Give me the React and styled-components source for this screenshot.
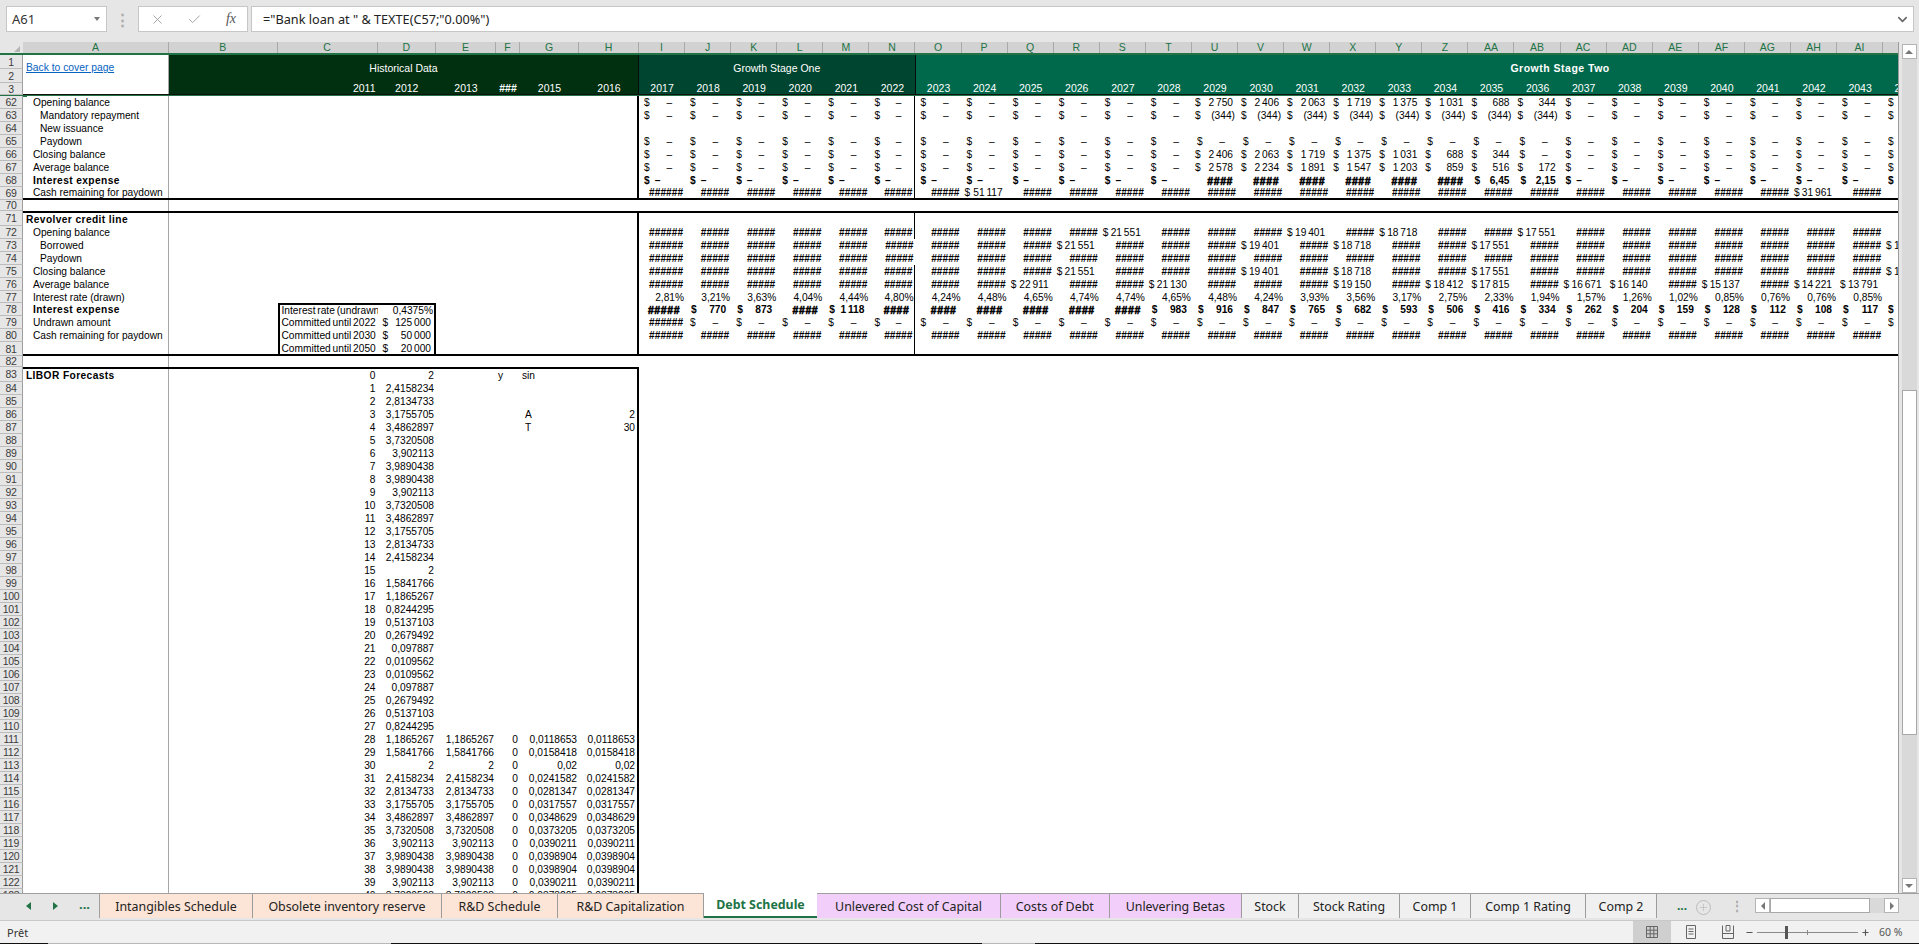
import React from 'react';
import styled, { createGlobalStyle } from 'styled-components';
import { X, Check, Plus, Minus, ChevronDown } from 'lucide-react';

const GRID = '146px 108.5px 100px 58.5px 60px 24px 59px 60px repeat(28, 46.08px)';
const GREEN = '#217346';

const Global = createGlobalStyle`
  html, body { margin: 0; padding: 0; background: #e6e6e6; overflow: hidden; }
  * { box-sizing: border-box; }
`;

const Page = styled.div`
  width: 1919px;
  height: 944px;
  display: flex;
  flex-direction: column;
  overflow: hidden;
  font-family: "Liberation Sans", Arial, sans-serif;
  color: #000;
`;

/* formula bar */
const FormulaBar = styled.div`
  height: 42px;
  flex: none;
  display: flex;
  align-items: flex-start;
  padding: 6px 5px 0 6px;
  font-family: "Noto Sans", sans-serif;
  font-size: 13px;
  color: #333;
`;
const NameBox = styled.div`
  width: 101px;
  height: 26px;
  background: #fff;
  border: 1px solid #c6c6c6;
  display: flex;
  align-items: center;
  justify-content: space-between;
  padding: 0 6px 0 5px;
`;
const Caret = styled.span`
  width: 0;
  height: 0;
  border-left: 3.5px solid transparent;
  border-right: 3.5px solid transparent;
  border-top: 4px solid #777;
`;
const Grip = styled.div`
  width: 31px;
  height: 26px;
  display: flex;
  align-items: center;
  justify-content: center;
  color: #a8a8a8;
  font-size: 15px;
  font-weight: 700;
`;
const FxGroup = styled.div`
  width: 110px;
  height: 26px;
  background: #fff;
  border: 1px solid #c6c6c6;
  display: grid;
  grid-template-columns: 36px 38px 36px;
  align-items: center;
  justify-items: center;
  color: #a0a0a0;
`;
const FxLabel = styled.span`
  font-family: "Liberation Serif", serif;
  font-style: italic;
  font-size: 14px;
  color: #555;
`;
const FormulaInput = styled.div`
  margin-left: 3px;
  flex: 1;
  height: 26px;
  background: #fff;
  border: 1px solid #c6c6c6;
  display: flex;
  align-items: center;
  justify-content: space-between;
  padding: 0 3px 0 11px;
  font-size: 12.7px;
  color: #222;
  svg { color: #666; }
`;

/* sheet */
const SheetArea = styled.div`
  height: 851px;
  flex: none;
  display: flex;
`;
const Sheet = styled.div`
  width: 1899px;
  flex: none;
  overflow: hidden;
  background: #fff;
  border-right: 1px solid #9c9c9c;
  display: flex;
  flex-direction: column;
`;
const ColumnHeader = styled.div`
  flex: none;
  height: 13px;
  display: flex;
  background: #d2d2d2;
  border-bottom: 2px solid ${GREEN};
`;
const Corner = styled.div`
  width: 23px;
  flex: none;
  background: #e6e6e6;
  display: flex;
  justify-content: flex-end;
  align-items: flex-end;
  padding: 0 3px 1px 0;
`;
const CornerMark = styled.span`
  width: 0;
  height: 0;
  border-left: 6px solid transparent;
  border-bottom: 6px solid #b4b4b4;
`;
const ColumnLetters = styled.div`
  display: grid;
  grid-template-columns: ${GRID};
`;
const ColumnLetter = styled.div`
  font-size: 10.5px;
  line-height: 11px;
  text-align: center;
  color: ${GREEN};
  border-right: 1px solid #a9a9a9;
`;

const TopBlock = styled.div`
  flex: none;
  height: 40px;
  display: flex;
  border-bottom: 1px solid #111;
`;
const TopNumbers = styled.div`
  width: 23px;
  flex: none;
  display: grid;
  grid-template-rows: 14px 14px 12px;
`;
const LinkCell = styled.div`
  width: 146px;
  flex: none;
  padding: 2px 0 0 3px;
  border-right: 1px solid #a6a6a6;
`;
const CoverLink = styled.a`
  color: #0563c1;
  font-size: 10.3px;
  text-decoration: underline;
`;
const Band = styled.div`
  flex: none;
  width: ${(p) => p.$w}px;
  background: ${(p) => p.$bg};
  color: #fff;
  display: flex;
  flex-direction: column;
  border-right: 1px solid #0a0a0a;
  font-size: 10.5px;
`;
const BandTitle = styled.div`
  flex: 1;
  display: flex;
  align-items: center;
  justify-content: center;
  font-weight: ${(p) => (p.$bold ? 700 : 400)};
  letter-spacing: ${(p) => (p.$bold ? '0.5px' : '0')};
  padding-bottom: 1px;
`;
const Years = styled.div`
  height: 12px;
  display: grid;
  grid-template-columns: ${(p) => p.$cols};
  line-height: 12px;
`;
const Year = styled.span`
  text-align: ${(p) => p.$align || 'center'};
  padding-right: ${(p) => (p.$align ? '2px' : '0')};
  font-weight: ${(p) => (p.$bold ? 700 : 400)};
`;
const FreezeLine = styled.div`
  flex: none;
  height: 1px;
  background: ${GREEN};
  position: relative;
`;
const ActiveCellMark = styled.span`
  position: absolute;
  left: 23px;
  top: 0;
  width: 4px;
  height: 2px;
  background: ${GREEN};
`;

const Line = styled.div`
  flex: none;
  height: ${(p) => p.$h}px;
  display: flex;
`;
const RowNo = styled.div`
  width: 23px;
  flex: none;
  background: #e6e6e6;
  border-right: 1px solid #9e9e9e;
  border-bottom: 1px solid #bcbcbc;
  color: #3c3c3c;
  font-size: 10.5px;
  letter-spacing: -0.3px;
  display: flex;
  align-items: center;
  justify-content: center;
`;
const Cells = styled.div`
  flex: none;
  width: ${(p) => (p.$short ? '616px' : 'auto')};
  display: grid;
  grid-template-columns: ${(p) => (p.$short ? '146px 108.5px 100px 58.5px 60px 24px 59px 60px' : GRID)};
  grid-auto-rows: 1fr;
  border-top: ${(p) => (p.$top ? '2px solid #000' : '0')};
  border-bottom: ${(p) => (p.$bottom ? '2px solid #000' : '0')};
  font-size: 10.2px;
  word-spacing: -1px;
`;
const Cell = styled.div`
  min-width: 0;
  display: flex;
  align-items: center;
  white-space: nowrap;
  overflow: hidden;
  justify-content: ${(p) => p.$justify || 'flex-end'};
  padding: 0 ${(p) => p.$pr ?? 2}px 0 ${(p) => p.$pl ?? 3}px;
  font-weight: ${(p) => (p.$bold ? 700 : 400)};
  border-right: ${(p) => (p.$edge ? '2px solid #000' : p.$divider ? '1px solid #000' : '0')};
  ${(p) => p.$boxTop && 'border-top: 2px solid #000;'}
  ${(p) => p.$boxLeft && 'border-left: 2px solid #000;'}
  ${(p) => p.$boxRight && 'border-right: 2px solid #000;'}
`;
const LabelCell = styled.div`
  display: flex;
  align-items: center;
  white-space: nowrap;
  word-spacing: 0;
  padding-left: ${(p) => p.$indent * 7 + 3}px;
  font-weight: ${(p) => (p.$bold ? 700 : 400)};
  letter-spacing: ${(p) => (p.$bold ? '0.4px' : '0')};
  border-right: 1px solid #a6a6a6;
  overflow: hidden;
`;
const Dash = styled.span`
  margin-left: ${(p) => (p.$bold ? '5px' : 'auto')};
  margin-right: ${(p) => (p.$bold ? 'auto' : '13px')};
`;
const Hash = styled.span`
  font-size: 10.2px;
  font-weight: 700;
`;
const BoldHash = styled.span`
  font-size: 10.5px;
  font-weight: 700;
  letter-spacing: 0.6px;
  -webkit-text-stroke: 0.5px #000;
`;
const Plain = styled.span`
  font-weight: 400;
`;

/* scrollbar */
const ScrollRail = styled.div`
  flex: 1;
  display: flex;
  flex-direction: column;
  align-items: center;
  padding-top: 2px;
`;
const ScrollButton = styled.div`
  width: 15px;
  height: 15px;
  flex: none;
  background: #fff;
  border: 1px solid #b4b4b4;
  display: flex;
  align-items: center;
  justify-content: center;
`;
const ScrollUp = styled.span`
  width: 0;
  height: 0;
  border-left: 4px solid transparent;
  border-right: 4px solid transparent;
  border-bottom: 4px solid #777;
`;
const ScrollDown = styled(ScrollUp)`
  border-bottom: 0;
  border-top: 4px solid #777;
`;
const ScrollTrack = styled.div`
  flex: 1;
  width: 15px;
  background: #d9d9d9;
  padding-top: 331px;
`;
const ScrollThumb = styled.div`
  height: 345px;
  background: #fff;
  border: 1px solid #a8a8a8;
`;

/* sheet tabs */
const TabBar = styled.div`
  flex: none;
  height: 28px;
  display: flex;
  align-items: flex-start;
  border-top: 1px solid #a0a0a0;
  border-bottom: 1px solid #c8c8c8;
  font-family: "Noto Sans", sans-serif;
  font-size: 12.4px;
`;
const TabNav = styled.div`
  width: 100px;
  height: 24px;
  flex: none;
  display: flex;
  align-items: center;
  padding-left: 26px;
  gap: 22px;
  border-right: 1px solid #a0a0a0;
  color: ${GREEN};
`;
const NavArrow = styled.span`
  width: 0;
  height: 0;
  border-top: 4px solid transparent;
  border-bottom: 4px solid transparent;
  ${(p) => (p.$right ? `border-left: 5px solid ${GREEN};` : `border-right: 5px solid ${GREEN};`)}
`;
const NavDots = styled.span`
  font-weight: 700;
  font-size: 13px;
  margin: -4px 0 0 -1px;
`;
const Tab = styled.div`
  flex: none;
  width: ${(p) => p.$w}px;
  height: 24px;
  display: flex;
  align-items: center;
  justify-content: center;
  background: ${(p) => p.$bg || '#f0f0f0'};
  color: #222;
  border-right: 1px solid #9c9c9c;
  white-space: nowrap;
  ${(p) => p.$active && `
    margin-top: -1px;
    height: 25px;
    background: #fff;
    color: ${GREEN};
    font-weight: 700;
    border-right: 0;
    border-bottom: 2px solid ${GREEN};
  `}
`;
const TabTools = styled.div`
  flex: 1;
  height: 26px;
  display: flex;
  align-items: center;
  padding-left: 20px;
  position: relative;
  color: #aaa;
`;
const MoreDots = styled.span`
  color: ${GREEN};
  font-weight: 700;
  font-size: 12px;
  margin: -4px 0 0 0;
  width: 18px;
`;
const AddCircle = styled.span`
  width: 15px;
  height: 15px;
  border: 1px solid #bcbcbc;
  border-radius: 50%;
  display: flex;
  align-items: center;
  justify-content: center;
  margin-left: 1px;
  color: #bbb;
`;
const ToolGrip = styled.span`
  margin-left: 20px;
  font-weight: 700;
  font-size: 12px;
  margin-top: -3px;
  color: #a8a8a8;
`;
const HScroll = styled.div`
  margin-left: auto;
  margin-right: 20px;
  width: 144px;
  height: 15px;
  display: flex;
  background: #d9d9d9;
  margin-top: -3px;
`;
const HButton = styled.div`
  width: 15px;
  flex: none;
  background: #fff;
  border: 1px solid #b4b4b4;
  display: flex;
  align-items: center;
  justify-content: center;
`;
const HCaret = styled.span`
  width: 0;
  height: 0;
  border-top: 4px solid transparent;
  border-bottom: 4px solid transparent;
  ${(p) => (p.$right ? 'border-left: 4px solid #777;' : 'border-right: 4px solid #777;')}
`;
const HThumb = styled.div`
  width: 100px;
  background: #fff;
  border: 1px solid #a8a8a8;
`;
const HGap = styled.div`
  flex: 1;
`;

/* status bar */
const StatusBar = styled.div`
  flex: none;
  height: 22px;
  background: #f1f1f1;
  display: flex;
  align-items: center;
  padding-left: 7px;
  font-family: "Noto Sans", sans-serif;
  font-size: 11px;
  color: #333;
`;
const StatusRight = styled.div`
  margin-left: auto;
  display: flex;
  align-items: center;
  height: 100%;
  color: #555;
`;
const ViewButton = styled.div`
  width: ${(p) => p.$w}px;
  height: 22px;
  display: flex;
  align-items: center;
  justify-content: center;
  background: ${(p) => (p.$on ? '#cfcfcf' : 'transparent')};
`;
const ZoomSlider = styled.div`
  width: 101px;
  height: 1px;
  margin: 0 3px;
  background: #8a8a8a;
  position: relative;
`;
const SliderKnob = styled.span`
  position: absolute;
  left: 28px;
  top: -6px;
  width: 3px;
  height: 13px;
  background: #555;
`;
const SliderTick = styled.span`
  position: absolute;
  left: 50px;
  top: -2px;
  width: 1px;
  height: 5px;
  background: #8a8a8a;
`;
const ZoomValue = styled.span`
  width: 49px;
  padding-left: 9px;
  font-size: 10.5px;
`;
const Taskbar = styled.div`
  flex: none;
  height: 1px;
  background: linear-gradient(90deg, #111 0 48px, #b8b8b8 48px 391px, #111 391px 982px, #b8b8b8 982px 1035px, #111 1035px);
`;

const LETTERS = ['A', 'B', 'C', 'D', 'E', 'F', 'G', 'H', 'I', 'J', 'K', 'L', 'M', 'N', 'O', 'P', 'Q', 'R', 'S', 'T', 'U', 'V', 'W', 'X', 'Y', 'Z', 'AA', 'AB', 'AC', 'AD', 'AE', 'AF', 'AG', 'AH', 'AI', 'AJ'];
const GROWTH = LETTERS.slice(8);
const H5 = '#####';
const H6 = '######';
const H4 = '####';

// valeurs par colonne, le reste prend la valeur par défaut
const line = (fallback, over = {}) => GROWTH.map((c) => (c in over ? over[c] : fallback));
const series = (first, values) => {
  const start = GROWTH.indexOf(first);
  const out = {};
  values.forEach((v, i) => { out[GROWTH[start + i]] = v; });
  return out;
};

const PCT = ['2,81', '3,21', '3,63', '4,04', '4,44', '4,80', '4,24', '4,48', '4,65', '4,74', '4,74', '4,65', '4,48', '4,24', '3,93', '3,56', '3,17', '2,75', '2,33', '1,94', '1,57', '1,26', '1,02', '0,85', '0,76', '0,76', '0,85'];

const LIBOR = [
  ['1', '2,4158234'], ['2', '2,8134733'], ['3', '3,1755705'], ['4', '3,4862897'], ['5', '3,7320508'],
  ['6', '3,902113'], ['7', '3,9890438'], ['8', '3,9890438'], ['9', '3,902113'], ['10', '3,7320508'],
  ['11', '3,4862897'], ['12', '3,1755705'], ['13', '2,8134733'], ['14', '2,4158234'], ['15', '2'],
  ['16', '1,5841766'], ['17', '1,1865267'], ['18', '0,8244295'], ['19', '0,5137103'], ['20', '0,2679492'],
  ['21', '0,097887'], ['22', '0,0109562'], ['23', '0,0109562'], ['24', '0,097887'], ['25', '0,2679492'],
  ['26', '0,5137103'], ['27', '0,8244295'],
  ['28', '1,1865267', '0,0118653'], ['29', '1,5841766', '0,0158418'], ['30', '2', '0,02'],
  ['31', '2,4158234', '0,0241582'], ['32', '2,8134733', '0,0281347'], ['33', '3,1755705', '0,0317557'],
  ['34', '3,4862897', '0,0348629'], ['35', '3,7320508', '0,0373205'], ['36', '3,902113', '0,0390211'],
  ['37', '3,9890438', '0,0398904'], ['38', '3,9890438', '0,0398904'], ['39', '3,902113', '0,0390211'],
  ['40', '3,7320508', '0,0373205'],
];

const TABS = [
  { name: 'Intangibles Schedule', w: 153, bg: '#fce4d6' },
  { name: 'Obsolete inventory reserve', w: 189, bg: '#fce4d6' },
  { name: 'R&D Schedule', w: 116, bg: '#fce4d6' },
  { name: 'R&D Capitalization', w: 146, bg: '#fce4d6' },
  { name: 'Debt Schedule', w: 113, active: true },
  { name: 'Unlevered Cost of Capital', w: 184, bg: '#f2cffb' },
  { name: 'Costs of Debt', w: 108.5, bg: '#f2cffb' },
  { name: 'Unlevering Betas', w: 132.5, bg: '#f2cffb' },
  { name: 'Stock', w: 57 },
  { name: 'Stock Rating', w: 101 },
  { name: 'Comp 1', w: 71 },
  { name: 'Comp 1 Rating', w: 115 },
  { name: 'Comp 2', w: 71 },
];

function Amount({ value, bold, divider }) {
  if (value === '') return <Cell $divider={divider} />;
  if (value === '-') {
    return (
      <Cell $bold={bold} $divider={divider} $justify="flex-start" $pl={5} $pr={0}>
        $<Dash $bold={bold}>–</Dash>
      </Cell>
    );
  }
  if (value[0] === '#') {
    return <Cell $divider={divider} $pr={bold ? 5 : 2}>{bold ? <BoldHash>{value}</BoldHash> : <Hash>{value}</Hash>}</Cell>;
  }
  if (value.endsWith('%')) return <Cell $divider={divider} $pr={1}>{value}</Cell>;
  return (
    <Cell $bold={bold} $divider={divider} $justify="space-between" $pl={bold ? 6 : 3} $pr={value[0] === '(' ? 3 : 5}>
      <span>$</span><span>{value}</span>
    </Cell>
  );
}

function Row({ no, h = 13, label, indent = 0, bold, labelBold, mid, values, top, bottom, noEdge, noDivider, short }) {
  const midCells = mid || {};
  return (
    <Line $h={h}>
      <RowNo>{no}</RowNo>
      <Cells $top={top} $bottom={bottom} $short={short}>
        <LabelCell $indent={indent} $bold={bold || labelBold}>{label}</LabelCell>
        {['B', 'C', 'D', 'E', 'F', 'G', 'H'].map((c) => {
          const edge = c === 'H' && !noEdge;
          const node = midCells[c];
          if (node && node.box) return <Cell key={c} {...node.box} $edge={edge}>{node.text}</Cell>;
          return <Cell key={c} $edge={edge}>{node}</Cell>;
        })}
        {values && values.map((v, i) => (
          <Amount key={i} value={v} bold={bold} divider={GROWTH[i] === 'N' && !noDivider} />
        ))}
      </Cells>
    </Line>
  );
}

const boxLabel = (text, first) => ({
  box: { $justify: 'flex-start', $boxLeft: true, $boxTop: first, $pl: 2, $pr: 0 },
  text,
});
const boxAmount = (text, first) => ({
  box: { $justify: 'space-between', $boxRight: true, $boxTop: first, $pl: 5, $pr: 3 },
  text: <><span>$</span><span>{text}</span></>,
});

export default function App() {
  const empty = line('');
  return (
    <Page>
      <Global />
      <FormulaBar>
        <NameBox>A61<Caret /></NameBox>
        <Grip>⋮</Grip>
        <FxGroup>
          <X size={15} strokeWidth={1.5} />
          <Check size={15} strokeWidth={1.5} />
          <FxLabel>fx</FxLabel>
        </FxGroup>
        <FormulaInput>
          ="Bank loan at " &amp; TEXTE(C57;"0.00%")
          <ChevronDown size={15} strokeWidth={2.5} />
        </FormulaInput>
      </FormulaBar>

      <SheetArea>
        <Sheet>
          <ColumnHeader>
            <Corner><CornerMark /></Corner>
            <ColumnLetters>
              {LETTERS.map((l) => <ColumnLetter key={l}>{l}</ColumnLetter>)}
            </ColumnLetters>
          </ColumnHeader>

          <TopBlock>
            <TopNumbers>
              <RowNo>1</RowNo>
              <RowNo>2</RowNo>
              <RowNo>3</RowNo>
            </TopNumbers>
            <LinkCell><CoverLink href="#cover">Back to cover page</CoverLink></LinkCell>
            <Band $w={470} $bg="#00300f">
              <BandTitle>Historical Data</BandTitle>
              <Years $cols="108.5px 100px 58.5px 60px 24px 59px 60px">
                <span />
                <Year $align="right">2011</Year>
                <Year>2012</Year>
                <Year>2013</Year>
                <Year $bold>###</Year>
                <Year>2015</Year>
                <Year>2016</Year>
              </Years>
            </Band>
            <Band $w={276.5} $bg="#00452f">
              <BandTitle>Growth Stage One</BandTitle>
              <Years $cols="repeat(6, 46.08px)">
                {['2017', '2018', '2019', '2020', '2021', '2022'].map((y) => <Year key={y}>{y}</Year>)}
              </Years>
            </Band>
            <Band $w={1290.2} $bg="#00694b">
              <BandTitle $bold>Growth Stage Two</BandTitle>
              <Years $cols="repeat(28, 46.08px)">
                {GROWTH.slice(6).map((c, i) => <Year key={c}>{2023 + i}</Year>)}
              </Years>
            </Band>
          </TopBlock>
          <FreezeLine><ActiveCellMark /></FreezeLine>

          <Row no={62} indent={1} label="Opening balance" values={line('-', series('U', ['2 750', '2 406', '2 063', '1 719', '1 375', '1 031', '688', '344']))} />
          <Row no={63} indent={2} label="Mandatory repayment" values={line('-', series('U', Array(8).fill('(344)')))} />
          <Row no={64} indent={2} label="New issuance" values={empty} />
          <Row no={65} indent={2} label="Paydown" values={line('-')} />
          <Row no={66} indent={1} label="Closing balance" values={line('-', series('U', ['2 406', '2 063', '1 719', '1 375', '1 031', '688', '344']))} />
          <Row no={67} indent={1} label="Average balance" values={line('-', series('U', ['2 578', '2 234', '1 891', '1 547', '1 203', '859', '516', '172']))} />
          <Row no={68} indent={1} bold label="Interest expense" values={line('-', series('U', [H4, H4, H4, H4, H4, H4, '6,45', '2,15']))} />
          <Row no={69} indent={1} bottom label="Cash remaining for paydown" values={line(H5, { I: H6, P: '51 117', AH: '31 961' })} />
          <Row no={70} h={11} noEdge noDivider values={empty} />

          <Row no={71} h={15} top labelBold label="Revolver credit line" values={empty} />
          <Row no={72} indent={1} label="Opening balance" values={line(H5, { I: H6, S: '21 551', W: '19 401', Y: '18 718', AB: '17 551' })} />
          <Row no={73} indent={2} noDivider label="Borrowed" values={line(H5, { I: H6, R: '21 551', V: '19 401', X: '18 718', AA: '17 551', AJ: '17 000' })} />
          <Row no={74} indent={2} noDivider label="Paydown" values={line(H5, { I: H6 })} />
          <Row no={75} indent={1} label="Closing balance" values={line(H5, { I: H6, R: '21 551', V: '19 401', X: '18 718', AA: '17 551', AJ: '17 000' })} />
          <Row no={76} indent={1} label="Average balance" values={line(H5, { I: H6, Q: '22 911', T: '21 130', X: '19 150', Z: '18 412', AA: '17 815', AC: '16 671', AD: '16 140', AF: '15 137', AH: '14 221', AI: '13 791' })} />
          <Row no={77} h={12} indent={1} label="Interest rate (drawn)" values={GROWTH.map((c, i) => (PCT[i] ? `${PCT[i]}%` : ''))} />
          <Row
            no={78}
            indent={1}
            bold
            label="Interest expense"
            mid={{ C: boxLabel(<Plain>Interest rate (undrawn)</Plain>, true), D: { box: { $boxRight: true, $boxTop: true, $pr: 1, $pl: 0 }, text: <Plain>0,4375%</Plain> } }}
            values={line(H4, { I: H5, ...series('T', ['983', '916', '847', '765', '682', '593', '506', '416', '334', '262', '204', '159', '128', '112', '108', '117', '']), J: '770', K: '873', M: '1 118', AJ: '-' })}
          />
          <Row no={79} indent={1} label="Undrawn amount" mid={{ C: boxLabel('Committed until 2022'), D: boxAmount('125 000') }} values={line('-', { I: H6 })} />
          <Row no={80} indent={1} label="Cash remaining for paydown" mid={{ C: boxLabel('Committed until 2030'), D: boxAmount('50 000') }} values={line(H5, { I: H6 })} />
          <Row no={81} h={14} bottom mid={{ C: boxLabel('Committed until 2050'), D: boxAmount('20 000') }} values={empty} />
          <Row no={82} h={11} noEdge noDivider values={empty} />

          <Row no={83} h={15} top short labelBold label="LIBOR Forecasts" mid={{ C: '0', D: '2', F: { box: { $justify: 'flex-start', $pl: 2, $pr: 0 }, text: 'y' }, G: { box: { $justify: 'flex-start', $pl: 2 }, text: 'sin' } }} />
          {LIBOR.map(([n, v, rate], i) => {
            const mid = { C: n, D: v };
            if (rate) {
              mid.E = v;
              mid.F = '0';
              mid.G = rate;
              mid.H = rate;
            }
            if (n === '3') {
              mid.G = { box: { $justify: 'flex-start', $pl: 5 }, text: 'A' };
              mid.H = '2';
            }
            if (n === '4') {
              mid.G = { box: { $justify: 'flex-start', $pl: 5 }, text: 'T' };
              mid.H = '30';
            }
            return <Row key={n} no={84 + i} short mid={mid} />;
          })}
        </Sheet>
        <ScrollRail>
          <ScrollButton><ScrollUp /></ScrollButton>
          <ScrollTrack><ScrollThumb /></ScrollTrack>
          <ScrollButton><ScrollDown /></ScrollButton>
        </ScrollRail>
      </SheetArea>

      <TabBar>
        <TabNav>
          <NavArrow />
          <NavArrow $right />
          <NavDots>...</NavDots>
        </TabNav>
        {TABS.map((t) => (
          <Tab key={t.name} $w={t.w} $bg={t.bg} $active={t.active}>{t.name}</Tab>
        ))}
        <TabTools>
          <MoreDots>...</MoreDots>
          <AddCircle><Plus size={11} strokeWidth={1.5} /></AddCircle>
          <ToolGrip>⋮</ToolGrip>
          <HScroll>
            <HButton><HCaret /></HButton>
            <HThumb />
            <HGap />
            <HButton><HCaret $right /></HButton>
          </HScroll>
        </TabTools>
      </TabBar>

      <StatusBar>
        Prêt
        <StatusRight>
          <ViewButton $w={38} $on>
            <svg width="14" height="14" viewBox="0 0 14 14" fill="none" stroke="#666">
              <path d="M1.5 1.5h11v11h-11zM1.5 5.2h11M1.5 8.8h11M5.2 1.5v11M8.8 1.5v11" />
            </svg>
          </ViewButton>
          <ViewButton $w={39}>
            <svg width="12" height="14" viewBox="0 0 12 14" fill="none" stroke="#666">
              <path d="M1.5.5h9v13h-9zM3.5 4h5M3.5 6.5h5M3.5 9h5" />
            </svg>
          </ViewButton>
          <ViewButton $w={35}>
            <svg width="14" height="14" viewBox="0 0 14 14" fill="none" stroke="#666">
              <path d="M1.5.5v13h11V.5M1.5 8.5h11M5 .5h4v5.5H5z" />
            </svg>
          </ViewButton>
          <Minus size={9} strokeWidth={3} color="#555" />
          <ZoomSlider><SliderKnob /><SliderTick /></ZoomSlider>
          <Plus size={9} strokeWidth={3} color="#555" />
          <ZoomValue>60 %</ZoomValue>
        </StatusRight>
      </StatusBar>
      <Taskbar />
    </Page>
  );
}
